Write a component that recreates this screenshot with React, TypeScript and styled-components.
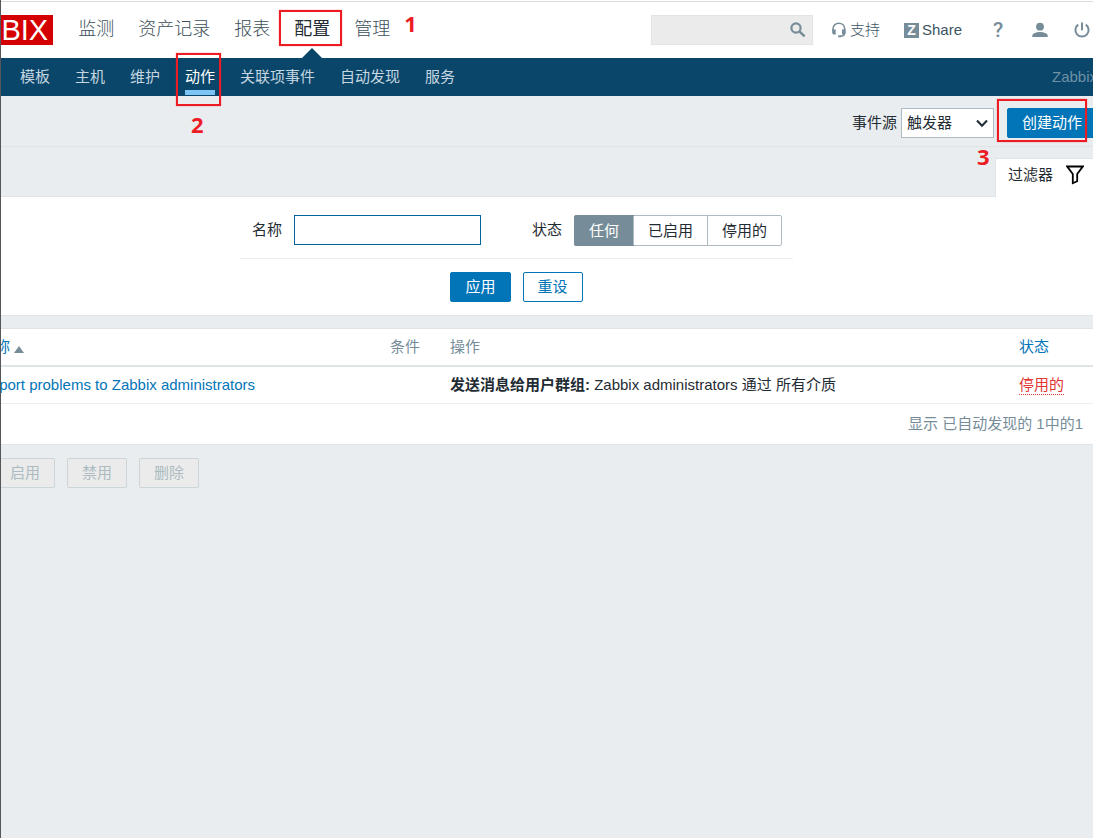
import React from "react";
import styled, { createGlobalStyle, css } from "styled-components";

const GlobalStyle = createGlobalStyle`
  *, *::before, *::after { box-sizing: border-box; }
  body {
    margin: 0;
    background: #e9edf0;
    color: #1f2c33;
    font: 15px/20px "Liberation Sans", "Noto Sans CJK SC", sans-serif;
  }
  button, input, select { font: inherit; color: inherit; margin: 0; }
  a { color: inherit; text-decoration: none; }
`;

const Page = styled.div`
  min-height: 100vh;
  overflow: hidden;
  border-left: 1px solid #55565a;
`;

/* The sheet is wider than its window on both sides. */
const Sheet = styled.div`
  margin: 0 -4px 0 -65px;
`;

const Header = styled.header`
  display: flex;
  align-items: center;
  height: 58px;
  background: #fff;
  box-shadow: inset 0 1px #fff, inset 0 2px #d9dcdd;
`;

const Logo = styled.a`
  padding: 0 5px 0 9px;
  height: 30px;
  margin-top: 2px;
  background: #d40000;
  color: #fff;
  font-size: 29px;
  line-height: 31px;
`;

const MainNav = styled.nav`
  display: flex;
  gap: 24px;
  margin-left: 25px;
  align-self: stretch;
`;

const MainLink = styled.a<{ $active?: boolean }>`
  position: relative;
  font-size: 18px;
  font-weight: 300;
  line-height: 59px;
  color: ${(p) => (p.$active ? "#1f2c33" : "#3c4f5a")};
  ${(p) =>
    p.$active &&
    css`
      font-weight: 400;
      &::after {
        content: "";
        position: absolute;
        left: 50%;
        bottom: 0;
        margin-left: -10px;
        border: 10px solid transparent;
        border-top: 0;
        border-bottom-color: #0a466a;
      }
    `}
`;

const Mark = styled.span<{ $top: number; $height: number; $side: number; $right?: number }>`
  position: absolute;
  top: ${(p) => p.$top}px;
  height: ${(p) => p.$height}px;
  left: ${(p) => -p.$side}px;
  right: ${(p) => -(p.$right ?? p.$side)}px;
  border: 2px solid #ed1c24;
  box-shadow: 0 0 1px rgba(237, 28, 36, 0.7);
  pointer-events: none;
`;

const Step = styled.span<{ $left: number; $top: number }>`
  position: absolute;
  left: ${(p) => p.$left}px;
  top: ${(p) => p.$top}px;
  font: 700 22px/22px "Open Sans", sans-serif;
  color: #ed1c24;
  pointer-events: none;
`;

const Tools = styled.div`
  display: flex;
  align-items: center;
  margin-left: auto;
  margin-top: 2px;
  padding-right: 7px;
  color: #3c5563;
`;

const SearchBox = styled.form`
  display: flex;
  align-items: center;
  width: 162px;
  height: 30px;
  margin-right: 18px;
  background: #ebebeb;
  border: 1px solid #e1e4e5;
`;

const SearchInput = styled.input`
  flex: 1;
  min-width: 0;
  padding: 0 6px;
  border: 0;
  background: transparent;
  outline: none;
`;

const IconButton = styled.button`
  display: flex;
  align-items: center;
  justify-content: center;
  padding: 0;
  border: 0;
  background: none;
  color: #768d99;
`;

const SearchButton = styled(IconButton)`
  width: 28px;
  height: 28px;
`;

const ToolLink = styled.a`
  display: flex;
  align-items: center;
  gap: 3px;
  font-weight: 300;
`;

const ShareLink = styled(ToolLink)`
  margin-left: 24px;
`;

const ZBadge = styled.span`
  width: 15px;
  height: 15px;
  background: #768d99;
  color: #fff;
  font-size: 14px;
  font-weight: 700;
  line-height: 15px;
  text-align: center;
`;

const ToolIcons = styled.div`
  display: flex;
  align-items: center;
  gap: 26px;
  margin-left: 28px;
`;

const ToolIcon = styled(IconButton)`
  width: 16px;
  height: 20px;
`;

const HelpIcon = styled(ToolIcon)`
  font: 500 21px/20px Roboto, sans-serif;
`;

const SubNav = styled.nav`
  display: flex;
  gap: 25px;
  height: 38px;
  padding-left: 84px;
  background: #0a466a;
  color: #c5d6e0;
`;

const SubLink = styled.a<{ $active?: boolean }>`
  position: relative;
  line-height: 38px;
  ${(p) =>
    p.$active &&
    css`
      color: #fff;
      &::after {
        content: "";
        position: absolute;
        left: 0;
        right: 0;
        bottom: 1px;
        height: 5px;
        background: #7cc4f5;
      }
    `}
`;

const ServerName = styled.span`
  margin-left: auto;
  line-height: 38px;
  color: #6d91a7;
`;

const TitleBar = styled.div`
  display: flex;
  justify-content: flex-end;
  align-items: center;
  height: 51px;
  padding-top: 3px;
  border-bottom: 1px solid #dfe4e7;
`;

const SelectWrap = styled.span`
  position: relative;
  margin: 0 13px 0 4px;
  svg {
    position: absolute;
    right: 6px;
    top: 11px;
    pointer-events: none;
  }
`;

const Select = styled.select`
  appearance: none;
  display: block;
  width: 93px;
  height: 30px;
  padding: 0 24px 0 5px;
  border: 1px solid #acbbc2;
  border-radius: 0;
  background: #fff;
`;

const Button = styled.button<{ $outline?: boolean }>`
  height: 30px;
  padding: 0 14px;
  border: 1px solid #0275b8;
  border-radius: 2px;
  background: ${(p) => (p.$outline ? "#fff" : "#0275b8")};
  color: ${(p) => (p.$outline ? "#0275b8" : "#fff")};
  line-height: 28px;
  &:disabled {
    border-color: #ccd5d9;
    background: #ebebeb;
    color: #acbbc2;
  }
`;

const CreateWrap = styled.span`
  position: relative;
`;

const FilterTabRow = styled.div`
  display: flex;
  justify-content: flex-end;
  padding-top: 11px;
`;

const FilterTab = styled.button`
  position: relative;
  display: flex;
  align-items: center;
  gap: 13px;
  height: 39px;
  margin-bottom: -1px;
  padding: 0 12px 6px;
  border: 1px solid #dfe4e7;
  border-bottom: 0;
  background: #fff;
`;

const FilterPanel = styled.form`
  padding: 18px 0 13px;
  border: 1px solid #dfe4e7;
  border-width: 1px 0;
  background: #fff;
`;

const FilterFields = styled.div`
  display: flex;
  align-items: center;
  width: fit-content;
  height: 44px;
  margin: 0 auto;
  padding: 0 11px 13px 12px;
  border-bottom: 1px solid #ebeef0;
`;

const FieldLabel = styled.label`
  margin-right: 12px;
`;

const TextInput = styled.input`
  width: 187px;
  height: 30px;
  margin-right: 51px;
  padding: 0 5px;
  border: 1px solid #03629b;
  outline: none;
`;

const Segments = styled.div`
  display: flex;
  border: 1px solid #acbbc2;
  border-radius: 2px;
`;

const Segment = styled.label`
  position: relative;
  & + & { border-left: 1px solid #acbbc2; }
  input {
    position: absolute;
    inset: 0;
    opacity: 0;
  }
  span {
    display: block;
    padding: 0 14px;
    line-height: 29px;
  }
  input:checked + span {
    margin: -1px;
    padding: 1px 15px;
    background: #768d99;
    color: #fff;
    border-radius: 2px 0 0 2px;
  }
`;

const FilterButtons = styled.div`
  display: flex;
  justify-content: center;
  gap: 12px;
  margin-top: 13px;
`;

const Table = styled.table`
  width: 100%;
  margin-top: 12px;
  border: 1px solid #dfe4e7;
  border-width: 1px 0;
  border-collapse: separate;
  border-spacing: 0;
  table-layout: fixed;
  background: #fff;
`;

const Th = styled.th<{ $width?: number }>`
  width: ${(p) => (p.$width ? `${p.$width}px` : "auto")};
  height: 38px;
  padding: 0;
  border-bottom: 2px solid #dfe4e7;
  color: #768d99;
  font-weight: 400;
  text-align: left;
  &:first-child { padding-left: 44px; }
`;

const Td = styled.td`
  height: 37px;
  padding: 0;
  border-bottom: 1px solid #ebeef0;
  &:first-child { padding-left: 44px; }
`;

const FooterTd = styled.td`
  height: 40px;
  padding: 0 14px 0 0;
  color: #768d99;
  text-align: right;
`;

const Link = styled.a`
  color: #0275b8;
`;

const SortArrow = styled.span`
  display: inline-block;
  margin-left: 4px;
  border: 5px solid transparent;
  border-top: 0;
  border-bottom: 7px solid #768d99;
  vertical-align: -1px;
`;

const StatusLink = styled.a`
  display: inline-block;
  border-bottom: 1px dotted #e33734;
  color: #e33734;
  line-height: 18px;
`;

const Actions = styled.div`
  display: flex;
  gap: 12px;
  padding: 13px 0 0 59px;
`;

const mainItems = ["监测", "资产记录", "报表", "配置", "管理"];
const subItems = ["模板", "主机", "维护", "动作", "关联项事件", "自动发现", "服务"];
const states = ["任何", "已启用", "停用的"];

export default function App() {
  return (
    <Page>
      <GlobalStyle />
      <Sheet>
        <Header>
          <Logo href="#">ZABBIX</Logo>
          <MainNav>
            {mainItems.map((name) => (
              <MainLink key={name} href="#" $active={name === "配置"}>
                {name}
                {name === "配置" && <Mark $top={10} $height={36} $side={15} $right={12} />}
                {name === "管理" && <Step $left={50} $top={12}>1</Step>}
              </MainLink>
            ))}
          </MainNav>
          <Tools>
            <SearchBox>
              <SearchInput type="text" aria-label="搜索" />
              <SearchButton type="button" aria-label="搜索">
                <svg width="16" height="16" viewBox="0 0 16 16" fill="none" stroke="currentColor">
                  <circle cx="6" cy="6" r="4.6" strokeWidth="2.2" />
                  <path d="M9.4 9.4L14.6 14.4" strokeWidth="2.6" />
                </svg>
              </SearchButton>
            </SearchBox>
            <ToolLink href="#">
              <svg width="16" height="16" viewBox="0 0 16 16" fill="none" stroke="#768d99">
                <path d="M2 9V7C2 3.4 4.5 1.3 7.8 1.3S13.7 3.4 13.7 7V11C13.7 13 12 14.3 9 14.3" strokeWidth="1.6" />
                <path d="M1.2 7.5H4.7V12.5H3.2C1.9 12.5 1.2 11.5 1.2 10.4ZM14.5 7.5H11V12.5H12.5C13.8 12.5 14.5 11.5 14.5 10.4Z" fill="#768d99" stroke="none" />
                <path d="M7.2 14.3H10" strokeWidth="2" />
              </svg>
              支持
            </ToolLink>
            <ShareLink href="#">
              <ZBadge>Z</ZBadge>
              Share
            </ShareLink>
            <ToolIcons>
              <HelpIcon type="button">?</HelpIcon>
              <ToolIcon type="button" aria-label="用户">
                <svg width="16" height="16" viewBox="0 0 16 16" fill="currentColor">
                  <circle cx="8" cy="4.7" r="3.9" />
                  <path d="M0.3 15V13.6C0.3 11.2 4.8 10 8 10S15.7 11.2 15.7 13.6V15Z" />
                </svg>
              </ToolIcon>
              <ToolIcon type="button" aria-label="退出">
                <svg width="16" height="16" viewBox="0 0 16 16" fill="none" stroke="currentColor" strokeWidth="2">
                  <path d="M8 0.6V8.2M4.2 2.6A6.6 6.6 0 1 0 11.8 2.6" />
                </svg>
              </ToolIcon>
            </ToolIcons>
          </Tools>
        </Header>

        <SubNav>
          {subItems.map((name) => (
            <SubLink key={name} href="#" $active={name === "动作"}>
              {name}
              {name === "动作" && (
                <>
                  <Mark $top={-5} $height={53} $side={9} $right={6} />
                  <Step $left={6} $top={55}>2</Step>
                </>
              )}
            </SubLink>
          ))}
          <ServerName>Zabbix</ServerName>
        </SubNav>

        <TitleBar>
          <label htmlFor="source">事件源</label>
          <SelectWrap>
            <Select id="source" defaultValue="触发器">
              <option>触发器</option>
            </Select>
            <svg width="12" height="9" viewBox="0 0 12 9" fill="none" stroke="#1f2c33" strokeWidth="2">
              <path d="M1 1.5L6 6.8L11 1.5" />
            </svg>
          </SelectWrap>
          <CreateWrap>
            <Button type="button">创建动作</Button>
            <Mark $top={-9} $height={43} $side={10} $right={-10} />
            <Step $left={-30} $top={37}>3</Step>
          </CreateWrap>
        </TitleBar>

        <FilterTabRow>
          <FilterTab type="button">
            过滤器
            <svg width="18" height="20" viewBox="0 0 18 20" fill="none" stroke="#000" strokeWidth="1.8">
              <path d="M1.2 1.5H16.8L11.2 9V16.2L6.8 18.2V9Z" />
            </svg>
          </FilterTab>
        </FilterTabRow>

        <FilterPanel>
          <FilterFields>
            <FieldLabel htmlFor="name">名称</FieldLabel>
            <TextInput id="name" type="text" />
            <FieldLabel as="span" id="state-label">状态</FieldLabel>
            <Segments role="radiogroup" aria-labelledby="state-label">
              {states.map((name, i) => (
                <Segment key={name}>
                  <input type="radio" name="state" defaultChecked={i === 0} />
                  <span>{name}</span>
                </Segment>
              ))}
            </Segments>
          </FilterFields>
          <FilterButtons>
            <Button type="button">应用</Button>
            <Button type="button" $outline>重设</Button>
          </FilterButtons>
        </FilterPanel>

        <Table>
          <thead>
            <tr>
              <Th $width={454}><Link href="#">名称<SortArrow /></Link></Th>
              <Th $width={60}>条件</Th>
              <Th>操作</Th>
              <Th $width={78}><Link href="#">状态</Link></Th>
            </tr>
          </thead>
          <tbody>
            <tr>
              <Td><Link href="#">Report problems to Zabbix administrators</Link></Td>
              <Td />
              <Td><b>发送消息给用户群组:</b> Zabbix administrators 通过 所有介质</Td>
              <Td><StatusLink href="#">停用的</StatusLink></Td>
            </tr>
          </tbody>
          <tfoot>
            <tr>
              <FooterTd colSpan={4}>显示 已自动发现的 1中的1</FooterTd>
            </tr>
          </tfoot>
        </Table>

        <Actions>
          <Button type="button" disabled>启用</Button>
          <Button type="button" disabled>禁用</Button>
          <Button type="button" disabled>删除</Button>
        </Actions>
      </Sheet>
    </Page>
  );
}
